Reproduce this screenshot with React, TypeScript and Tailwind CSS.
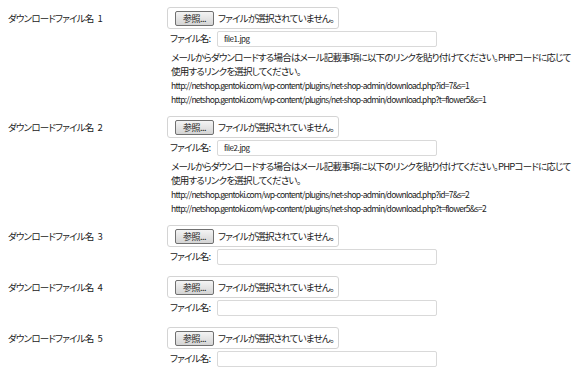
import React from "react";

type Row = {
  n: number;
  file?: string;
};

const rows: Row[] = [
  { n: 1, file: "file1.jpg" },
  { n: 2, file: "file2.jpg" },
  { n: 3 },
  { n: 4 },
  { n: 5 },
];

const BASE = "http://netshop.gentoki.com/wp-content/plugins/net-shop-admin/download.php";

function FileBox() {
  return (
    <div className="flex h-[22px] w-[172px] items-center rounded-[3px] border border-[#d4d4d4] bg-white pl-[7px]">
      <span className="flex h-[15px] w-[39px] items-center justify-center rounded-[2px] border border-[#707070] bg-gradient-to-b from-[#f4f4f4] to-[#d4d4d4] text-[9px] leading-none tracking-[-0.5px] text-[#222]">
        参照...
      </span>
      <span className="ml-[4px] whitespace-nowrap text-[9.5px] tracking-[-0.8px] text-[#222]">
        ファイルが選択されていません。
      </span>
    </div>
  );
}

export default function App() {
  return (
    <div className="h-[373px] w-[580px] overflow-hidden bg-white pt-[7px] text-[#222] [font-family:'Noto_Sans_CJK_JP','Liberation_Sans',sans-serif] [font-feature-settings:'palt']">
      {rows.map((r) => (
        <div key={r.n} className={r.file ? "flex pb-[10px]" : "flex pb-[11px]"}>
          <div className="w-[167px] whitespace-nowrap pl-[8px] pt-[4px] text-[9.5px] leading-[14px] tracking-[-0.8px]">
            ダウンロードファイル名<span className="ml-[4px]">{r.n}</span>
          </div>
          <div className="flex flex-col">
            <FileBox />
            <div className="mt-[1px] flex h-[17px] items-center pl-[3px]">
              <span className="w-[47px] whitespace-nowrap text-[9.5px] tracking-[-0.8px]">ファイル名:</span>
              <div className="flex h-[16px] w-[220px] items-center rounded-[2px] border border-[#d9d9d9] pl-[6px] text-[8px] tracking-[-0.5px]">
                {r.file ?? ""}
              </div>
            </div>
            {r.file && (
              <div className="mt-[3px] whitespace-nowrap pl-[4px] text-[9.5px] leading-[14px] tracking-[-0.8px]">
                <p>
                  メールからダウンロードする場合はメール記載事項に以下のリンクを貼り付けてください。PHPコードに応じて
                  <br />
                  使用するリンクを選択してください。
                </p>
                <p className="text-[8.5px] tracking-[-0.75px]">
                  {BASE}?id=7&amp;s={r.n}
                </p>
                <p className="text-[8.5px] tracking-[-0.75px]">
                  {BASE}?t=flower5&amp;s={r.n}
                </p>
              </div>
            )}
          </div>
        </div>
      ))}
    </div>
  );
}
